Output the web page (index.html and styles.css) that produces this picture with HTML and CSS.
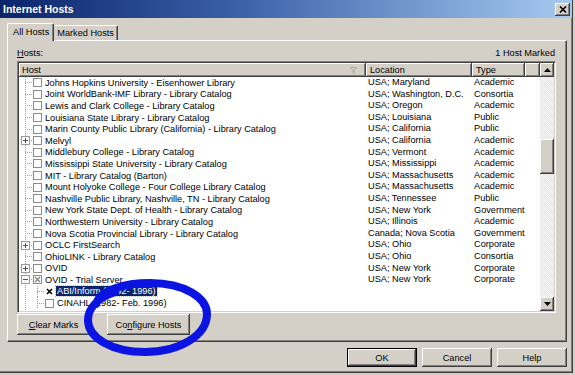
FILE: index.html
```html
<!DOCTYPE html>
<html lang="en">
<head>
    <meta charset="UTF-8">
    <title>Internet Hosts</title>
    <link rel="stylesheet" href="styles.css">
</head>
<body>
    <div class="window">
        <!-- Title bar -->
        <div class="titlebar">
            <span class="title">Internet Hosts</span>
            <span class="close-btn">
                <svg width="8" height="7" viewBox="0 0 8 7"><path d="M1 0.5l6 6M7 0.5l-6 6" stroke="#000" stroke-width="1.6"/></svg>
            </span>
        </div>

        <!-- Tabs -->
        <div class="tabs">
            <div class="tab active">All Hosts</div>
            <div class="tab">Marked Hosts</div>
        </div>

        <div class="panel">
            <div class="hosts-head">
                <span><u>H</u>osts:</span>
                <span>1 Host Marked</span>
            </div>

            <div class="list">
                <div class="cols">
                    <div class="list-header">
                        <div class="hcell">Host
                            <svg class="filter" width="7" height="7" viewBox="0 0 7 7"><path d="M0.5 0.5h6l-2.5 3v3l-1-1v-2z" fill="none" stroke="#a8a8a8"/></svg>
                        </div>
                        <div class="hcell">Location</div>
                        <div class="hcell">Type</div>
                        <div class="hcell"></div>
                    </div>

                    <div class="list-body">
                        <div class="row">
                            <div class="host"><span class="twig"></span><span class="cb"></span><span class="label">Johns Hopkins University - Eisenhower Library</span></div>
                            <div class="loc">USA; Maryland</div>
                            <div class="type">Academic</div>
                        </div>
                        <div class="row">
                            <div class="host"><span class="twig"></span><span class="cb"></span><span class="label">Joint WorldBank-IMF Library - Library Catalog</span></div>
                            <div class="loc">USA; Washington, D.C.</div>
                            <div class="type">Consortia</div>
                        </div>
                        <div class="row">
                            <div class="host"><span class="twig"></span><span class="cb"></span><span class="label">Lewis and Clark College - Library Catalog</span></div>
                            <div class="loc">USA; Oregon</div>
                            <div class="type">Academic</div>
                        </div>
                        <div class="row">
                            <div class="host"><span class="twig"></span><span class="cb"></span><span class="label">Louisiana State Library - Library Catalog</span></div>
                            <div class="loc">USA; Louisiana</div>
                            <div class="type">Public</div>
                        </div>
                        <div class="row">
                            <div class="host"><span class="twig"></span><span class="cb"></span><span class="label">Marin County Public Library (California) - Library Catalog</span></div>
                            <div class="loc">USA; California</div>
                            <div class="type">Public</div>
                        </div>
                        <div class="row">
                            <div class="host"><span class="twig"><svg class="exp" width="9" height="9" viewBox="0 0 9 9"><rect x="0.5" y="0.5" width="8" height="8" fill="#fff" stroke="#9a9a9a"/><path d="M2 4.5h5M4.5 2v5" stroke="#555"/></svg></span><span class="cb"></span><span class="label">Melvyl</span></div>
                            <div class="loc">USA; California</div>
                            <div class="type">Academic</div>
                        </div>
                        <div class="row">
                            <div class="host"><span class="twig"></span><span class="cb"></span><span class="label">Middlebury College - Library Catalog</span></div>
                            <div class="loc">USA; Vermont</div>
                            <div class="type">Academic</div>
                        </div>
                        <div class="row">
                            <div class="host"><span class="twig"></span><span class="cb"></span><span class="label">Mississippi State University - Library Catalog</span></div>
                            <div class="loc">USA; Mississippi</div>
                            <div class="type">Academic</div>
                        </div>
                        <div class="row">
                            <div class="host"><span class="twig"></span><span class="cb"></span><span class="label">MIT - Library Catalog (Barton)</span></div>
                            <div class="loc">USA; Massachusetts</div>
                            <div class="type">Academic</div>
                        </div>
                        <div class="row">
                            <div class="host"><span class="twig"></span><span class="cb"></span><span class="label">Mount Holyoke College - Four College Library Catalog</span></div>
                            <div class="loc">USA; Massachusetts</div>
                            <div class="type">Academic</div>
                        </div>
                        <div class="row">
                            <div class="host"><span class="twig"></span><span class="cb"></span><span class="label">Nashville Public Library, Nashville, TN - Library Catalog</span></div>
                            <div class="loc">USA; Tennessee</div>
                            <div class="type">Public</div>
                        </div>
                        <div class="row">
                            <div class="host"><span class="twig"></span><span class="cb"></span><span class="label">New York State Dept. of Health - Library Catalog</span></div>
                            <div class="loc">USA; New York</div>
                            <div class="type">Government</div>
                        </div>
                        <div class="row">
                            <div class="host"><span class="twig"></span><span class="cb"></span><span class="label">Northwestern University - Library Catalog</span></div>
                            <div class="loc">USA; Illinois</div>
                            <div class="type">Academic</div>
                        </div>
                        <div class="row">
                            <div class="host"><span class="twig"></span><span class="cb"></span><span class="label">Nova Scotia Provincial Library - Library Catalog</span></div>
                            <div class="loc">Canada; Nova Scotia</div>
                            <div class="type">Government</div>
                        </div>
                        <div class="row">
                            <div class="host"><span class="twig"><svg class="exp" width="9" height="9" viewBox="0 0 9 9"><rect x="0.5" y="0.5" width="8" height="8" fill="#fff" stroke="#9a9a9a"/><path d="M2 4.5h5M4.5 2v5" stroke="#555"/></svg></span><span class="cb"></span><span class="label">OCLC FirstSearch</span></div>
                            <div class="loc">USA; Ohio</div>
                            <div class="type">Corporate</div>
                        </div>
                        <div class="row">
                            <div class="host"><span class="twig"></span><span class="cb"></span><span class="label">OhioLINK - Library Catalog</span></div>
                            <div class="loc">USA; Ohio</div>
                            <div class="type">Consortia</div>
                        </div>
                        <div class="row">
                            <div class="host"><span class="twig"><svg class="exp" width="9" height="9" viewBox="0 0 9 9"><rect x="0.5" y="0.5" width="8" height="8" fill="#fff" stroke="#9a9a9a"/><path d="M2 4.5h5M4.5 2v5" stroke="#555"/></svg></span><span class="cb"></span><span class="label">OVID</span></div>
                            <div class="loc">USA; New York</div>
                            <div class="type">Corporate</div>
                        </div>
                        <div class="row">
                            <div class="host"><span class="twig"><svg class="exp" width="9" height="9" viewBox="0 0 9 9"><rect x="0.5" y="0.5" width="8" height="8" fill="#fff" stroke="#9a9a9a"/><path d="M2 4.5h5" stroke="#555"/></svg></span><span class="cb mixed"><svg width="7" height="7" viewBox="0 0 7 7"><path d="M1 1l5 5M6 1l-5 5" stroke="#808080" stroke-width="1.3"/></svg></span><span class="label">OVID - Trial Server</span></div>
                            <div class="loc">USA; New York</div>
                            <div class="type">Corporate</div>
                        </div>
                        <div class="row child">
                            <div class="host"><span class="twig"></span><span class="cb checked"><svg width="7" height="7" viewBox="0 0 7 7"><path d="M1 1l5 5M6 1l-5 5" stroke="#000" stroke-width="1.6"/></svg></span><span class="label selected">ABI/Inform (1992- 1996)</span></div>
                            <div class="loc"></div>
                            <div class="type"></div>
                        </div>
                        <div class="row child">
                            <div class="host"><span class="twig"></span><span class="cb"></span><span class="label">CINAHL (1982- Feb. 1996)</span></div>
                            <div class="loc"></div>
                            <div class="type"></div>
                        </div>
                    </div>
                </div>

                <!-- Vertical scrollbar -->
                <div class="vscroll">
                    <div class="sbtn">
                        <svg width="7" height="4" viewBox="0 0 7 4"><path d="M3.5 0L7 4H0z" fill="#000"/></svg>
                    </div>
                    <div class="track">
                        <div class="thumb"></div>
                    </div>
                    <div class="sbtn">
                        <svg width="7" height="4" viewBox="0 0 7 4"><path d="M0 0h7L3.5 4z" fill="#000"/></svg>
                    </div>
                </div>
            </div>

            <div class="panel-buttons">
                <div class="btn clear-btn"><u>C</u>lear Marks</div>
                <div class="btn config-btn">Co<u>n</u>figure Hosts</div>
            </div>
        </div>

        <div class="dialog-buttons">
            <div class="btn default">OK</div>
            <div class="btn">Cancel</div>
            <div class="btn">Help</div>
        </div>

        <!-- hand-drawn marker circle over the dialog -->
        <svg class="scribble" width="575" height="375" viewBox="0 0 575 375">
            <path d="M96 304 C100 290, 125 283, 150 283 C185 283, 207 298, 207 314 C207 335, 180 352, 145 352 C112 352, 88 338, 88 320 C88 308, 98 298, 115 292" fill="none" stroke="#0c14e2" stroke-width="8" stroke-linecap="round"/>
        </svg>
    </div>
</body>
</html>
```

FILE: styles.css
```css
/* Reset */
body {
    margin: 0;
    background: #d4d0c8;
    font-family: 'Liberation Sans', Arial, sans-serif;
    font-size: 9.2px;
    color: #000;
}

u {
    text-decoration: underline;
}

/* Window frame */
.window {
    position: relative;
    width: 573px;
    height: 373px;
    box-sizing: border-box;
    border-right: 1px solid #404040;
    border-bottom: 1px solid #404040;
    box-shadow: inset -1px -1px #808080;
    display: flex;
    flex-direction: column;
    overflow: hidden;
}

.titlebar {
    height: 18px;
    flex: none;
    display: flex;
    align-items: center;
    justify-content: space-between;
    padding: 0 2px 0 3px;
    background: linear-gradient(to right, #0a246a, #3a5ea6 40%, #a6caf0);
    color: #fff;
}

.title {
    font-weight: bold;
    font-size: 10.5px;
}

.close-btn {
    width: 15px;
    height: 13px;
    box-sizing: border-box;
    display: flex;
    align-items: center;
    justify-content: center;
    background: #d4d0c8;
    box-shadow: inset -1px -1px #404040, inset 1px 1px #fff, inset -2px -2px #808080;
}

/* Tabs */
.tabs {
    display: flex;
    align-items: flex-end;
    height: 17px;
    margin-top: 5px;
    padding-left: 7px;
}

.tab {
    height: 14px;
    line-height: 14px;
    padding: 0 4px;
    border-top: 1px solid #fff;
    border-right: 1px solid #404040;
    box-shadow: inset -1px 0 #808080;
    border-radius: 2px 2px 0 0;
}

.tab.active {
    position: relative;
    z-index: 1;
    height: 17px;
    line-height: 16px;
    margin-bottom: -1px;
    padding: 0 4px 0 5px;
    border-left: 1px solid #fff;
    background: #d4d0c8;
}

.tab:not(.active) {
    padding: 0 3px 0 3px;
}

/* Tab panel */
.panel {
    height: 302px;
    flex: none;
    box-sizing: border-box;
    margin: 0 5px 0 7px;
    padding: 0 10px 0 9px;
    border-top: 1px solid #fff;
    border-left: 1px solid #fff;
    border-right: 1px solid #404040;
    border-bottom: 1px solid #404040;
    box-shadow: inset -1px -1px #808080;
    display: flex;
    flex-direction: column;
}

.hosts-head {
    display: flex;
    justify-content: space-between;
    margin-top: 7px;
    height: 11px;
    line-height: 11px;
    padding-right: 1px;
}

/* List view */
.list {
    margin-top: 2px;
    height: 252px;
    box-sizing: border-box;
    border-top: 1px solid #808080;
    border-left: 1px solid #808080;
    border-right: 1px solid #fff;
    border-bottom: 1px solid #fff;
    box-shadow: inset 1px 1px #404040, inset -1px -1px #d4d0c8;
    padding: 1px;
    display: flex;
    background: #fff;
}

.cols {
    flex: 1;
    display: flex;
    flex-direction: column;
}

.list-header {
    display: grid;
    grid-template-columns: 347px 106px 53px 1fr;
    height: 14px;
    flex: none;
}

.hcell {
    display: flex;
    align-items: center;
    justify-content: space-between;
    padding: 0 9px 0 3px;
    background: #d4d0c8;
    box-shadow: inset -1px -1px #404040, inset 1px 1px #fff, inset -2px -2px #808080;
}

.hcell + .hcell {
    padding-left: 4px;
}

.filter {
    flex: none;
}

.list-body {
    flex: 1;
    overflow: hidden;
    background: repeating-linear-gradient(to bottom, #a0a0a0 0 1px, transparent 1px 2px) 6px 0 / 1px 100% no-repeat;
}

.row {
    display: grid;
    grid-template-columns: 347px 106px 1fr;
    height: 11.6px;
    line-height: 11.6px;
    white-space: nowrap;
}

.host {
    display: flex;
    align-items: center;
    padding-left: 2px;
}

.row.child .host {
    padding-left: 14px;
}

.loc {
    padding-left: 2px;
}

.type {
    padding-left: 2px;
}

.twig {
    width: 12px;
    height: 100%;
    flex: none;
    display: flex;
    align-items: center;
    background: repeating-linear-gradient(to right, #a0a0a0 0 1px, transparent 1px 2px) 4px 50% / 8px 1px no-repeat;
}

.row.child .twig {
    background:
        repeating-linear-gradient(to right, #a0a0a0 0 1px, transparent 1px 2px) 4px 50% / 8px 1px no-repeat,
        repeating-linear-gradient(to bottom, #a0a0a0 0 1px, transparent 1px 2px) 4px 0 / 1px 100% no-repeat;
}

.exp {
    display: block;
}

.cb {
    width: 9px;
    height: 9px;
    flex: none;
    box-sizing: border-box;
    border: 1px solid #8c8c8c;
    background: #fff;
    display: flex;
    align-items: center;
    justify-content: center;
}

.cb.checked {
    border-color: #fff;
}

.label {
    margin-left: 2px;
    padding: 0 1px;
    line-height: 10px;
}

.label.selected {
    background: #0a246a;
    color: #fff;
    outline: 1px dotted #c0c0c0;
}

/* Scrollbar */
.vscroll {
    width: 14px;
    flex: none;
    display: flex;
    flex-direction: column;
}

.sbtn {
    height: 14px;
    flex: none;
    box-sizing: border-box;
    display: flex;
    align-items: center;
    justify-content: center;
    background: #d4d0c8;
    box-shadow: inset -1px -1px #404040, inset 1px 1px #fff, inset -2px -2px #808080;
}

.track {
    flex: 1;
    background: conic-gradient(#fff 25%, #e2dfd8 0 50%, #fff 0 75%, #e2dfd8 0) 0 0 / 2px 2px;
}

.thumb {
    margin-top: 62px;
    height: 35px;
    background: #d4d0c8;
    box-shadow: inset -1px -1px #404040, inset 1px 1px #fff, inset -2px -2px #808080;
}

/* Buttons */
.btn {
    height: 21px;
    box-sizing: border-box;
    display: flex;
    align-items: center;
    justify-content: center;
    background: #d4d0c8;
    box-shadow: inset -1px -1px #404040, inset 1px 1px #fff, inset -2px -2px #808080;
}

.panel-buttons {
    display: flex;
    gap: 17px;
    margin-top: 1px;
}

.clear-btn {
    width: 73px;
}

.config-btn {
    width: 83px;
}

.dialog-buttons {
    display: flex;
    justify-content: flex-end;
    gap: 5px;
    margin: 6px 5px 0 0;
}

.dialog-buttons .btn {
    width: 70px;
    height: 19px;
}

.dialog-buttons .btn.default {
    border: 1px solid #000;
}

.scribble {
    position: absolute;
    left: 0;
    top: 0;
    pointer-events: none;
}
```
